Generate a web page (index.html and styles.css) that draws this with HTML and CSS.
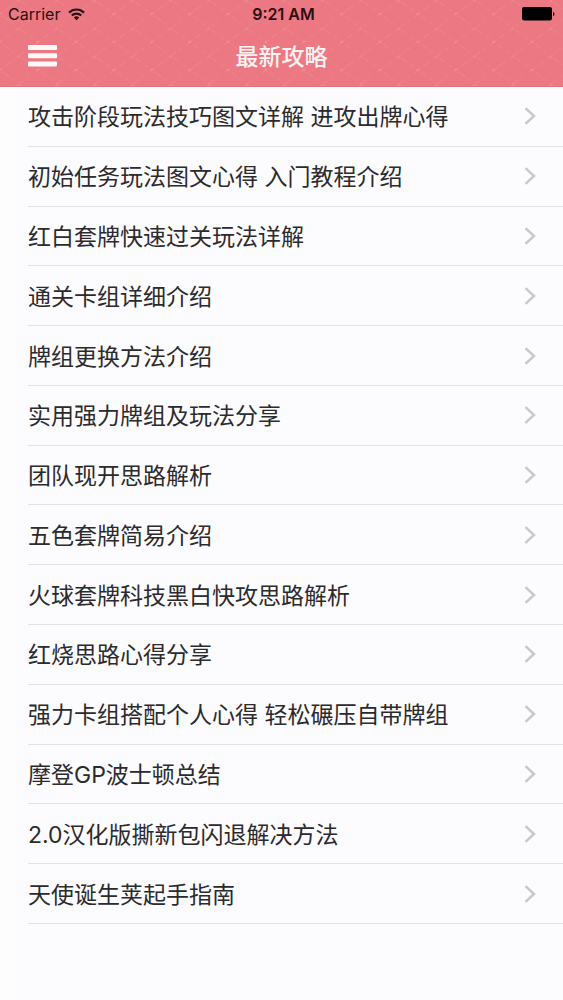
FILE: index.html
```html
<!DOCTYPE html>
<html lang="zh-CN">
<head>
<meta charset="utf-8">
<meta name="viewport" content="width=device-width, initial-scale=1">
<title>最新攻略</title>
<link rel="stylesheet" href="styles.css">
</head>
<body>
<svg class="symbols" aria-hidden="true">
  <symbol id="chevron" viewBox="0 0 12 18"><path d="M1.5 1.2 10 9 1.5 16.8" fill="none" stroke="currentColor" stroke-width="2.5"/></symbol>
</svg>
<header class="header">
  <svg class="texture" aria-hidden="true">
    <defs>
      <pattern id="lattice" width="38" height="28" patternUnits="userSpaceOnUse">
        <path d="M0 14 19 0 38 14 19 28Z" fill="none" stroke="#ffb5a8" stroke-opacity=".22" stroke-width="1" stroke-dasharray="4 3 7 5"/>
        <path d="M18 1h2M0 14h1M37 14h1" stroke="#ffd0c4" stroke-opacity=".3"/>
      </pattern>
    </defs>
    <rect width="100%" height="100%" fill="url(#lattice)"/>
  </svg>
  <div class="status">
    <span class="carrier">Carrier
      <svg class="wifi" width="17" height="13" viewBox="0 0 17 13" aria-hidden="true">
        <g fill="none" stroke="currentColor" stroke-width="2.2"><path d="M1 4.6a10.6 10.6 0 0 1 15 0"/><path d="M3.8 7.5a6.6 6.6 0 0 1 9.4 0"/></g>
        <path d="M5.8 9.5a3.8 3.8 0 0 1 5.4 0L8.5 12.3Z" fill="currentColor"/>
      </svg>
    </span>
    <span class="time">9:21 AM</span>
    <svg class="battery" width="33" height="14" viewBox="0 0 33 14" aria-hidden="true"><rect width="30" height="13.5" rx="2" fill="#000"/><path d="M31 5c2 .3 2 3.7 0 4Z" fill="#000"/></svg>
  </div>
  <div class="nav">
    <button class="menu" type="button" aria-label="菜单">
      <svg width="29" height="22" viewBox="0 0 29 22" aria-hidden="true"><g fill="#fff8f7"><rect y="0" width="29" height="5" rx="1"/><rect y="8.2" width="29" height="5" rx="1"/><rect y="16.4" width="29" height="5" rx="1"/></g></svg>
    </button>
    <h1 class="title">最新攻略</h1>
  </div>
</header>
<main class="content">
  <ul class="list">
    <li class="row"><a class="link" href="#"><span class="label">攻击阶段玩法技巧图文详解 进攻出牌心得</span><svg class="chevron" aria-hidden="true"><use href="#chevron"/></svg></a></li>
    <li class="row"><a class="link" href="#"><span class="label">初始任务玩法图文心得 入门教程介绍</span><svg class="chevron" aria-hidden="true"><use href="#chevron"/></svg></a></li>
    <li class="row"><a class="link" href="#"><span class="label">红白套牌快速过关玩法详解</span><svg class="chevron" aria-hidden="true"><use href="#chevron"/></svg></a></li>
    <li class="row"><a class="link" href="#"><span class="label">通关卡组详细介绍</span><svg class="chevron" aria-hidden="true"><use href="#chevron"/></svg></a></li>
    <li class="row"><a class="link" href="#"><span class="label">牌组更换方法介绍</span><svg class="chevron" aria-hidden="true"><use href="#chevron"/></svg></a></li>
    <li class="row"><a class="link" href="#"><span class="label">实用强力牌组及玩法分享</span><svg class="chevron" aria-hidden="true"><use href="#chevron"/></svg></a></li>
    <li class="row"><a class="link" href="#"><span class="label">团队现开思路解析</span><svg class="chevron" aria-hidden="true"><use href="#chevron"/></svg></a></li>
    <li class="row"><a class="link" href="#"><span class="label">五色套牌简易介绍</span><svg class="chevron" aria-hidden="true"><use href="#chevron"/></svg></a></li>
    <li class="row"><a class="link" href="#"><span class="label">火球套牌科技黑白快攻思路解析</span><svg class="chevron" aria-hidden="true"><use href="#chevron"/></svg></a></li>
    <li class="row"><a class="link" href="#"><span class="label">红烧思路心得分享</span><svg class="chevron" aria-hidden="true"><use href="#chevron"/></svg></a></li>
    <li class="row"><a class="link" href="#"><span class="label">强力卡组搭配个人心得 轻松碾压自带牌组</span><svg class="chevron" aria-hidden="true"><use href="#chevron"/></svg></a></li>
    <li class="row"><a class="link" href="#"><span class="label">摩登GP波士顿总结</span><svg class="chevron" aria-hidden="true"><use href="#chevron"/></svg></a></li>
    <li class="row"><a class="link" href="#"><span class="label">2.0汉化版撕新包闪退解决方法</span><svg class="chevron" aria-hidden="true"><use href="#chevron"/></svg></a></li>
    <li class="row"><a class="link" href="#"><span class="label">天使诞生荚起手指南</span><svg class="chevron" aria-hidden="true"><use href="#chevron"/></svg></a></li>
  </ul>
</main>
</body>
</html>
```

FILE: styles.css
```css
* { box-sizing: border-box; }

body {
  margin: 0;
  min-height: 100vh;
  background: linear-gradient(to right, #fdfdfe 16px, #fcfbfe 16px);
  color: #2b2a2d;
  font-family: Inter, "Noto Sans CJK SC", sans-serif;
}

.symbols { display: none; }

.header {
  position: relative;
  background: #eb7882;
  border-bottom: 1px solid #dc7380;
}

.texture {
  position: absolute;
  inset: 0;
  width: 100%;
  height: 100%;
}

.status {
  position: relative;
  display: grid;
  grid-template-columns: 1fr auto 1fr;
  align-items: center;
  height: 28px;
  padding: 0 8px;
  color: #2c1013;
  font-size: 16px;
  line-height: 28px;
}

.carrier {
  display: flex;
  align-items: center;
  gap: 8px;
}

.time {
  padding-left: 4px;
  font-weight: 600;
}

.battery { justify-self: end; }

.nav {
  position: relative;
  display: grid;
  grid-template-columns: 1fr auto 1fr;
  align-items: center;
  height: 58px;
  padding: 0 28px;
}

.menu {
  display: flex;
  justify-self: start;
  padding: 0 0 2px;
  border: 0;
  background: none;
}

.title {
  margin: 0;
  color: #fff4f3;
  font-size: 23px;
  font-weight: 500;
  line-height: 58px;
}

.list {
  display: grid;
  grid-auto-rows: 1fr;
  min-height: 837px;
  margin: 0;
  padding: 0 0 0 28px;
  list-style: none;
}

.row {
  display: grid;
  border-bottom: 1px solid #e2e1e4;
}

.link {
  display: flex;
  align-items: center;
  justify-content: space-between;
  padding-right: 27px;
  color: inherit;
  font-size: 23px;
  line-height: 34px;
  text-decoration: none;
}

.label { padding-top: 2px; }

.chevron {
  flex: none;
  width: 12px;
  height: 18px;
  color: #c9c8cb;
}
```
